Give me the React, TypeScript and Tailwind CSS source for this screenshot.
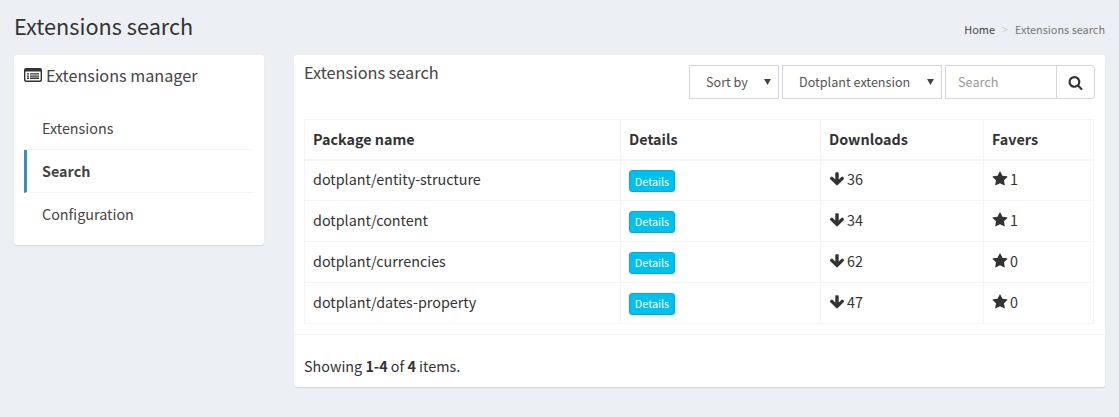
const rows = [
  { name: "dotplant/entity-structure", downloads: 36, favers: 1 },
  { name: "dotplant/content", downloads: 34, favers: 1 },
  { name: "dotplant/currencies", downloads: 62, favers: 0 },
  { name: "dotplant/dates-property", downloads: 47, favers: 0 },
];

function ListAltIcon() {
  return (
    <svg viewBox="0 0 18 14" className="h-[14px] w-[18px] fill-[#333]">
      <path
        fillRule="evenodd"
        d="M2 0h14a2 2 0 0 1 2 2v10a2 2 0 0 1-2 2H2a2 2 0 0 1-2-2V2a2 2 0 0 1 2-2Zm-.6 3.6v8.2c0 .5.3.8.8.8h13.6c.5 0 .8-.3.8-.8V3.6H1.4ZM3 5.2h2v1.4H3V5.2Zm3 0h9v1.4H6V5.2ZM3 7.4h2v1.4H3V7.4Zm3 0h9v1.4H6V7.4ZM3 9.6h2V11H3V9.6Zm3 0h9V11H6V9.6Z"
      />
    </svg>
  );
}

function ArrowDownIcon() {
  return (
    <svg viewBox="0 0 1792 1792" className="h-[16px] w-[16px] shrink-0 fill-[#333]">
      <path d="M1675 832q0 53-37 90l-651 652q-39 37-91 37-53 0-90-37l-651-652q-38-36-38-90 0-53 38-91l74-75q39-37 91-37 53 0 90 37l294 294v-704q0-52 38-90t90-38h128q52 0 90 38t38 90v704l294-294q37-37 90-37 52 0 91 37l75 75q37 39 37 91z" />
    </svg>
  );
}

function StarIcon() {
  return (
    <svg viewBox="0 0 1792 1792" className="h-[16px] w-[16px] shrink-0 fill-[#333]">
      <path d="M1728 647q0 22-26 48l-363 354 86 500q1 7 1 20 0 21-10.5 35.5t-30.5 14.5q-19 0-40-12l-449-236-449 236q-22 12-40 12-21 0-31.5-14.5t-10.5-35.5q0-6 2-20l86-500-364-354q-25-27-25-48 0-37 56-46l502-73 225-455q19-41 49-41t49 41l225 455 502 73q56 9 56 46z" />
    </svg>
  );
}

function SearchIcon() {
  return (
    <svg viewBox="0 0 1792 1792" className="h-[15px] w-[15px] fill-[#333]">
      <path d="M1216 832q0-185-131.5-316.5t-316.5-131.5-316.5 131.5-131.5 316.5 131.5 316.5 316.5 131.5 316.5-131.5 131.5-316.5zm512 832q0 52-38 90t-90 38q-54 0-90-38l-343-342q-179 124-399 124-143 0-273.5-55.5t-225-150-150-225-55.5-273.5 55.5-273.5 150-225 225-150 273.5-55.5 273.5 55.5 225 150 150 225 55.5 273.5q0 220-124 399l343 343q37 37 37 90z" />
    </svg>
  );
}

function Caret() {
  return (
    <svg viewBox="0 0 8 7" className="-mt-px h-[6px] w-[7px] fill-[#444]">
      <path d="M0 0h8L4 7z" />
    </svg>
  );
}

function SideLink({ label, active, last }: { label: string; active?: boolean; last?: boolean }) {
  return (
    <a
      className={
        "flex h-[43px] items-center text-[14.35px] text-[#444] " +
        (active ? "border-l-[3px] border-l-[#3c8dbc] pl-[15px] font-bold " : "pl-[18px] ") +
        (last ? "pb-[2px]" : "border-b border-b-[#f4f4f4]")
      }
    >
      {label}
    </a>
  );
}

export default function App() {
  return (
    <div
      className="h-[417px] w-[1119px] overflow-hidden bg-[#ecf0f5] px-[14px] text-[14.35px] text-[#333]"
      style={{ fontFamily: '"Noto Sans CJK JP", "Noto Sans", sans-serif' }}
    >
      <header className="flex h-[55px] items-start justify-between">
        <h1 className="mt-[11px] text-[21.7px] leading-[30px] text-[#333]">Extensions search</h1>
        <nav className="mt-[20px] flex items-center text-[10.9px] leading-[18px]">
          <span className="text-[#444]">Home</span>
          <span className="px-[7px] text-[#ccc]">&gt;</span>
          <span className="text-[#777]">Extensions search</span>
        </nav>
      </header>

      <div className="flex items-start gap-[30px]">
        <aside className="h-[190px] w-[250px] rounded-[3px] bg-white px-[10px] shadow-[0_1px_1px_rgba(0,0,0,0.1)]">
          <h3 className="flex h-[40px] items-center gap-[4px] text-[16.2px] text-[#444]">
            <ListAltIcon />
            Extensions manager
          </h3>
          <div className="mt-[12px]">
            <SideLink label="Extensions" />
            <SideLink label="Search" active />
            <SideLink label="Configuration" last />
          </div>
        </aside>

        <main className="h-[332px] w-[811px] rounded-[3px] bg-white shadow-[0_1px_1px_rgba(0,0,0,0.1)]">
          <div className="px-[10px]">
            <div className="flex h-[64px] items-start justify-between">
              <h3 className="mt-[5px] text-[16.3px] leading-[24px] text-[#444]">Extensions search</h3>
              <div className="mt-[10px] flex gap-[3px]">
                <div className="flex h-[34px] w-[90px] items-center justify-between border border-[#d2d6de] pl-[16px] pr-[7px] text-[12.6px] text-[#555]">
                  Sort by
                  <Caret />
                </div>
                <div className="flex h-[34px] w-[160px] items-center justify-between border border-[#d2d6de] pl-[16px] pr-[7px] text-[12.6px] text-[#555]">
                  Dotplant extension
                  <Caret />
                </div>
                <div className="flex h-[34px] w-[150px]">
                  <input
                    placeholder="Search"
                    className="w-[112px] border border-[#d2d6de] px-[12px] text-[12.7px] outline-none placeholder:text-[#999]"
                  />
                  <button className="-ml-px flex flex-1 items-center justify-center rounded-r-[3px] border border-[#d2d6de]">
                    <SearchIcon />
                  </button>
                </div>
              </div>
            </div>

            <table className="w-[789px] table-fixed border-collapse border border-[#f4f4f4]">
              <colgroup>
                <col className="w-[316px]" />
                <col className="w-[200px]" />
                <col className="w-[163px]" />
                <col className="w-[110px]" />
              </colgroup>
              <thead>
                <tr className="h-[40px] text-left">
                  {["Package name", "Details", "Downloads", "Favers"].map((h) => (
                    <th key={h} className="border border-b-2 border-[#f4f4f4] px-[8px] font-bold">
                      {h}
                    </th>
                  ))}
                </tr>
              </thead>
              <tbody>
                {rows.map((r) => (
                  <tr key={r.name} className="h-[41px]">
                    <td className="border border-[#f4f4f4] px-[8px] pb-[2px]">{r.name}</td>
                    <td className="border border-[#f4f4f4] px-[8px]">
                      <button className="mt-px flex h-[22px] w-[46px] items-center justify-center rounded-[3px] border border-[#00acd6] bg-[#00c0ef] text-[10.8px] text-white">
                        Details
                      </button>
                    </td>
                    <td className="border border-[#f4f4f4] px-[8px] pb-[2px]">
                      <span className="flex items-center gap-[2px]">
                        <ArrowDownIcon />
                        {r.downloads}
                      </span>
                    </td>
                    <td className="border border-[#f4f4f4] px-[8px] pb-[2px]">
                      <span className="flex items-center gap-[2px]">
                        <StarIcon />
                        {r.favers}
                      </span>
                    </td>
                  </tr>
                ))}
              </tbody>
            </table>
          </div>

          <div className="mt-[10px] border-t border-[#f4f4f4] px-[10px] pt-[20px] leading-[21px]">
            Showing <b>1-4</b> of <b>4</b> items.
          </div>
        </main>
      </div>
    </div>
  );
}
